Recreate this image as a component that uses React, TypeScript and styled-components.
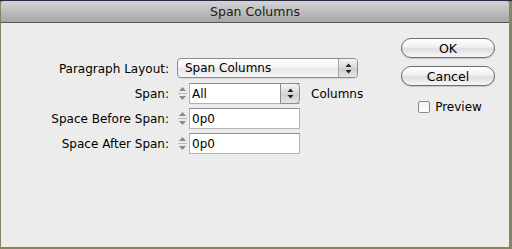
import React from 'react';
import styled, { createGlobalStyle } from 'styled-components';

const GlobalStyle = createGlobalStyle`
    html, body {
        margin: 0;
        padding: 0;
        background: #868660;
    }
    body {
        font-family: "DejaVu Sans", "Liberation Sans", sans-serif;
        font-size: 12px;
        color: #000;
    }
`

const Desk = styled.div`
    width: 512px;
    height: 249px;
    padding: 1px 3px 2px 1px;
    box-sizing: border-box;
    background: linear-gradient(to bottom, #2a2a40 0px, #2a2a40 1px, #868660 1px);
`

const Window = styled.div`
    height: 100%;
    display: flex;
    flex-direction: column;
    background: #ececec;
    border-radius: 4px 4px 0 0;
    overflow: hidden;
`

const TitleBar = styled.div`
    height: 21px;
    flex: none;
    display: flex;
    align-items: center;
    justify-content: center;
    background: linear-gradient(to bottom, #d4d4d4, #a6a6a6);
    border-bottom: 1px solid #575757;
    font-size: 12.5px;
    color: #1a1a1a;
`

const Body = styled.div`
    flex: 1;
    display: flex;
    padding: 15px 14px 0 0;
`

const Form = styled.div`
    flex: 1;
    display: grid;
    grid-template-columns: 168px auto;
    column-gap: 7px;
    row-gap: 4px;
    align-items: center;
    align-content: start;
    padding-top: 20px;
`

const Label = styled.div`
    justify-self: end;
    white-space: nowrap;
`

const Controls = styled.div<{ $gapBelow?: number }>`
    display: flex;
    align-items: center;
    margin-bottom: ${p => p.$gapBelow || 0}px;
`

const Popup = styled.div<{ $width: number }>`
    width: ${p => p.$width}px;
    height: 20px;
    box-sizing: border-box;
    display: flex;
    align-items: stretch;
    border: 1px solid #8c8c8c;
    border-radius: 4px;
    background: linear-gradient(to bottom, #ffffff, #f2f2f2 50%, #e6e6e6 51%, #f6f6f6);
    box-shadow: 0 1px 0 rgba(0, 0, 0, 0.08);
    margin-left: 1px;
`

const PopupText = styled.div`
    flex: 1;
    padding-left: 7px;
    display: flex;
    align-items: center;
`

const ArrowBox = styled.div`
    width: 18px;
    border-left: 1px solid #a8a8a8;
    display: flex;
    align-items: center;
    justify-content: center;
    background: linear-gradient(to bottom, #f4f4f4, #d8d8d8 50%, #cbcbcb 51%, #e6e6e6);
    border-radius: 0 3px 3px 0;
`

const Stepper = styled.div`
    width: 13px;
    height: 21px;
    display: flex;
    align-items: center;
    justify-content: center;
`

const Field = styled.div<{ $width: number }>`
    width: ${p => p.$width}px;
    height: 21px;
    box-sizing: border-box;
    border: 1px solid #b4b4b4;
    border-top-color: #8e8e8e;
    background: #fff;
    display: flex;
    align-items: center;
    padding-left: 2px;
`

const Combo = styled.div`
    width: 111px;
    height: 21px;
    box-sizing: border-box;
    display: flex;
    border: 1px solid #b4b4b4;
    border-top-color: #8e8e8e;
    border-right: none;
    background: #fff;
`

const ComboText = styled.div`
    flex: 1;
    display: flex;
    align-items: center;
    padding-left: 2px;
`

const ComboButton = styled.div`
    width: 18px;
    margin: -1px 0;
    border: 1px solid #8c8c8c;
    border-radius: 0 4px 4px 0;
    display: flex;
    align-items: center;
    justify-content: center;
    background: linear-gradient(to bottom, #f4f4f4, #d8d8d8 50%, #cbcbcb 51%, #e6e6e6);
`

const Unit = styled.div`
    margin-left: 11px;
`

const Buttons = styled.div`
    width: 94px;
    display: flex;
    flex-direction: column;
    align-items: center;
    gap: 8px;
`

const PushButton = styled.div`
    width: 94px;
    height: 20px;
    box-sizing: border-box;
    border: 1px solid #6c6c6c;
    border-radius: 10px;
    display: flex;
    align-items: center;
    justify-content: center;
    background: linear-gradient(to bottom, #ffffff, #f0f0f0 45%, #dedede 55%, #f8f8f8);
    box-shadow: 0 1px 1px rgba(0, 0, 0, 0.15);
    font-size: 12.5px;
`

const CheckRow = styled.label`
    display: flex;
    align-items: center;
    gap: 5px;
    margin-top: 6px;
    margin-left: 4px;
`

const Box = styled.span`
    width: 12px;
    height: 12px;
    box-sizing: border-box;
    border: 1px solid #8a8a8a;
    border-radius: 2px;
    background: linear-gradient(to bottom, #f2f2f2, #ffffff);
`

function UpDown({ color }: { color: string }) {
  return (
    <svg width="7" height="11" viewBox="0 0 7 11">
      <path d="M3.5 0.5 L6.5 4 L0.5 4 Z" fill={color} />
      <path d="M3.5 10.5 L6.5 7 L0.5 7 Z" fill={color} />
    </svg>
  )
}

function Spin() {
  return (
    <Stepper>
      <svg width="11" height="17" viewBox="0 0 11 17">
        <path d="M5.5 2 L9 6 L2 6 Z" fill="#8a8a8a" />
        <line x1="1" y1="8.5" x2="10" y2="8.5" stroke="#b8b8b8" />
        <path d="M5.5 15 L9 11 L2 11 Z" fill="#8a8a8a" />
      </svg>
    </Stepper>
  )
}

function App(): React.ReactElement {
  return (
    <Desk>
      <GlobalStyle />
      <Window>
        <TitleBar>Span Columns</TitleBar>
        <Body>
          <Form>
            <Label>Paragraph Layout:</Label>
            <Controls $gapBelow={1}>
              <Popup $width={181}>
                <PopupText>Span Columns</PopupText>
                <ArrowBox><UpDown color="#222" /></ArrowBox>
              </Popup>
            </Controls>

            <Label>Span:</Label>
            <Controls>
              <Spin />
              <Combo>
                <ComboText>All</ComboText>
                <ComboButton><UpDown color="#222" /></ComboButton>
              </Combo>
              <Unit>Columns</Unit>
            </Controls>

            <Label>Space Before Span:</Label>
            <Controls>
              <Spin />
              <Field $width={111}>0p0</Field>
            </Controls>

            <Label>Space After Span:</Label>
            <Controls>
              <Spin />
              <Field $width={111}>0p0</Field>
            </Controls>
          </Form>
          <Buttons>
            <PushButton>OK</PushButton>
            <PushButton>Cancel</PushButton>
            <CheckRow>
              <Box />
              <span>Preview</span>
            </CheckRow>
          </Buttons>
        </Body>
      </Window>
    </Desk>
  );
}

export default App;
